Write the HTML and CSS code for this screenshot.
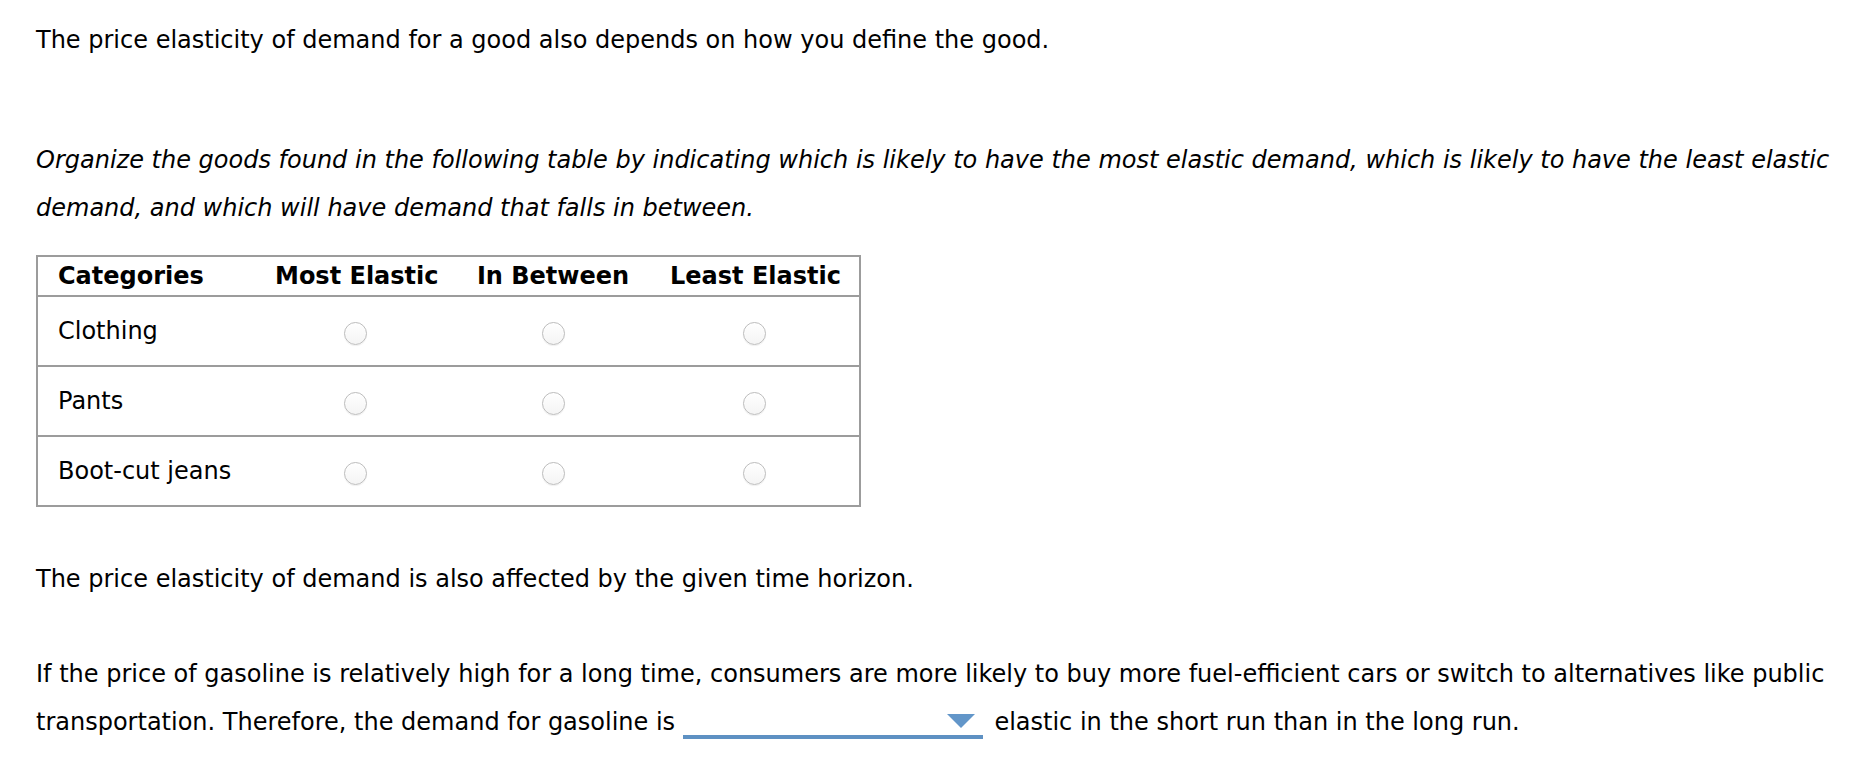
FILE: index.html
```html
<!DOCTYPE html>
<html lang="en">
<head>
  <meta charset="UTF-8" />
  <title>Price Elasticity</title>
  <link rel="stylesheet" href="styles.css">
</head>
<body>
  <div class="question">
    <p class="intro">The price elasticity of demand for a good also depends on how you define the good.</p>
    <p class="prompt">Organize the goods found in the following table by indicating which is likely to have the most elastic demand, which is likely to have the least elastic demand, and which will have demand that falls in between.</p>

    <table class="grid">
      <colgroup>
        <col class="col-cat">
        <col class="col-most">
        <col class="col-between">
        <col class="col-least">
      </colgroup>
      <thead>
        <tr>
          <th class="cat">Categories</th>
          <th>Most Elastic</th>
          <th>In Between</th>
          <th>Least Elastic</th>
        </tr>
      </thead>
      <tbody>
        <tr>
          <td class="cat">Clothing</td>
          <td><input type="radio" name="clothing"></td>
          <td><input type="radio" name="clothing"></td>
          <td><input type="radio" name="clothing"></td>
        </tr>
        <tr>
          <td class="cat">Pants</td>
          <td><input type="radio" name="pants"></td>
          <td><input type="radio" name="pants"></td>
          <td><input type="radio" name="pants"></td>
        </tr>
        <tr>
          <td class="cat">Boot-cut jeans</td>
          <td><input type="radio" name="jeans"></td>
          <td><input type="radio" name="jeans"></td>
          <td><input type="radio" name="jeans"></td>
        </tr>
      </tbody>
    </table>

    <p class="horizon">The price elasticity of demand is also affected by the given time horizon.</p>
    <p class="gasoline">If the price of gasoline is relatively high for a long time, consumers are more likely to buy more fuel-efficient cars or switch to alternatives like public transportation. Therefore, the demand for gasoline is <span class="dropdown"><span class="arrow"></span></span> elastic in the short run than in the long run.</p>
  </div>
</body>
</html>
```

FILE: styles.css
```css
* {
  margin: 0;
  padding: 0;
  box-sizing: border-box;
}

body {
  background: #ffffff;
  color: #000;
  font-family: "DejaVu Sans", Verdana, sans-serif;
  font-size: 24px;
}

.question {
  padding: 16px 14px 0 36px;
}

p {
  line-height: 48px;
}

.prompt {
  margin-top: 72px;
  font-style: italic;
}

.grid {
  margin-top: 23px;
  width: 823px;
  border-collapse: collapse;
  table-layout: fixed;
  border: 2px solid #9c9c9c;
}

.col-cat { width: 218px; }
.col-most { width: 201px; }
.col-between { width: 194px; }
.col-least { width: 210px; }

.grid th,
.grid td {
  text-align: center;
  line-height: 28px;
  white-space: nowrap;
}

.grid th {
  padding: 5px 20px;
  font-weight: bold;
}

.grid td {
  padding: 20px;
  border-top: 2px solid #9c9c9c;
}

.grid .cat {
  text-align: left;
}

.grid input[type="radio"] {
  -webkit-appearance: none;
  appearance: none;
  display: inline-block;
  width: 23px;
  height: 23px;
  margin-top: 2px;
  vertical-align: middle;
  border: 1px solid #bdbdbd;
  border-radius: 50%;
  background: linear-gradient(#ffffff, #f4f4f4);
  box-shadow: inset 0 1px 1px rgba(255, 255, 255, 0.9), 0 1px 1px rgba(0, 0, 0, 0.06);
}

.horizon {
  margin-top: 48px;
}

.gasoline {
  margin-top: 47px;
}

.dropdown {
  display: inline-block;
  position: relative;
  width: 300px;
  height: 30px;
  margin-right: 4px;
  vertical-align: -9px;
  border-bottom: 4px solid #5e91c3;
}

.dropdown .arrow {
  position: absolute;
  right: 8px;
  top: 5px;
  width: 0;
  height: 0;
  border-left: 14px solid transparent;
  border-right: 14px solid transparent;
  border-top: 14px solid #6296c9;
}
```
